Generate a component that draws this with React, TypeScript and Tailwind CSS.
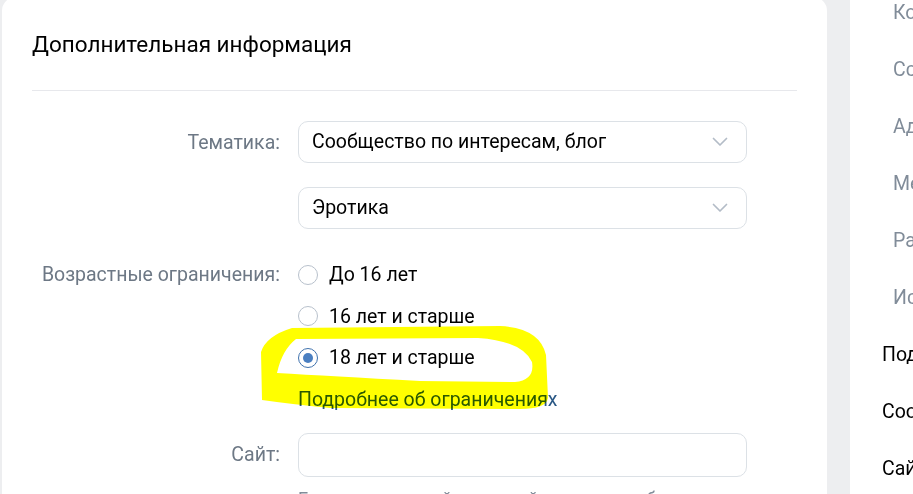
import React from 'react';

const font = { fontFamily: 'Roboto, "Noto Sans", Arial, sans-serif' };

const Chevron = () => (
  <svg width="16" height="10" viewBox="0 0 16 10" fill="none">
    <path d="M1.5 1.5 L8 8 L14.5 1.5" stroke="#b3bcc7" strokeWidth="1.7" strokeLinecap="round" strokeLinejoin="round" />
  </svg>
);

const Select = ({ value }: { value: string }) => (
  <div className="flex items-center justify-between w-[449px] h-[42px] pl-[13px] pr-[18px] border border-[#dce1e6] rounded-[10px] bg-white">
    <span className="text-[19.5px] text-black">{value}</span>
    <Chevron />
  </div>
);

const Radio = ({ label, checked }: { label: string; checked?: boolean }) => (
  <div className="flex items-center h-[41.5px]">
    {checked ? (
      <span className="flex items-center justify-center w-[20px] h-[20px] rounded-full border-[1.5px] border-[#3f72ad]">
        <span className="w-[10px] h-[10px] rounded-full bg-[#4a7fc1]" />
      </span>
    ) : (
      <span className="w-[20px] h-[20px] rounded-full border-[1.5px] border-[#b8c1cc]" />
    )}
    <span className="ml-[11px] text-[19.5px] text-black">{label}</span>
  </div>
);

const sideItems = [
  { t: 'Контакты', sub: true },
  { t: 'Ссылки', sub: true },
  { t: 'Адреса', sub: true },
  { t: 'Меню', sub: true },
  { t: 'Разделы', sub: true },
  { t: 'Истории', sub: true },
  { t: 'Подписчики', sub: false },
  { t: 'Сообщения', sub: false },
  { t: 'Сайт из сообщества', sub: false },
];

export default function App() {
  return (
    <div className="relative flex w-[913px] h-[494px] overflow-hidden bg-[#edeef0]" style={font}>
      <div className="ml-[2px] -mt-[3px] w-[825px] h-[520px] shrink-0 bg-white rounded-[14px] px-[30px]">
        <div className="h-[94px] flex flex-col">
          <h2 className="mt-[32px] text-[22.5px] leading-[30px] text-black">Дополнительная информация</h2>
          <div className="mt-auto h-px bg-[#e7e8ec]" />
        </div>

        <div className="flex mt-[30px]">
          <div className="w-[266px] pr-[18px] text-right text-[19.5px] text-[#6d7885] leading-[44px]">Тематика:</div>
          <div className="flex flex-col gap-[24px]">
            <Select value="Сообщество по интересам, блог" />
            <Select value="Эротика" />
          </div>
        </div>

        <div className="flex mt-[25px]">
          <div className="w-[266px] pr-[18px] text-right text-[19.5px] text-[#6d7885] leading-[41px] whitespace-nowrap">Возрастные ограничения:</div>
          <div className="flex flex-col">
            <Radio label="До 16 лет" />
            <Radio label="16 лет и старше" />
            <Radio label="18 лет и старше" checked />
            <a className="h-[42px] leading-[42px] text-[19.5px] text-[#2a5885]">Подробнее об ограничениях</a>
          </div>
        </div>

        <div className="flex mt-[12px]">
          <div className="w-[266px] pr-[18px] text-right text-[19.5px] text-[#6d7885] leading-[44px]">Сайт:</div>
          <div className="flex flex-col">
            <div className="w-[449px] h-[44px] border border-[#dce1e6] rounded-[10px]" />
            <p className="mt-[8px] text-[18px] text-[#818c99] whitespace-nowrap">Если у вас нет сайта, создайте его из сообщества</p>
          </div>
        </div>
      </div>

      <div className="ml-[23px] -mt-[16px] flex-1 bg-white">
        {sideItems.map((it) => (
          <div
            key={it.t}
            className={`h-[57px] flex items-center whitespace-nowrap text-[19.5px] ${it.sub ? 'pl-[43px] text-[#818c99]' : 'pl-[32px] text-black'}`}
          >
            {it.t}
          </div>
        ))}
      </div>

      <svg className="absolute left-0 top-0 pointer-events-none mix-blend-multiply" width="913" height="494" viewBox="0 0 913 494">
        <path
          fillRule="evenodd"
          fill="#ffff00"
          d="M262 400 L261 352 Q266 336 292 328 L500 326 Q540 328 546 355 L548 398 Q546 409 520 409 L330 408 Q290 404 262 400 Z
             M277 373 Q282 350 296 339 L478 338 Q522 341 532 362 Q535 380 515 382 L420 381 Q330 376 277 373 Z"
        />
      </svg>
    </div>
  );
}
